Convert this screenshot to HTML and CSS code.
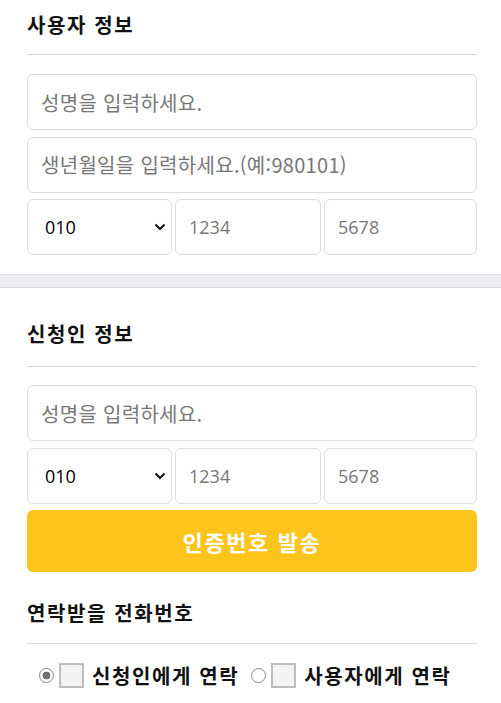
FILE: index.html
```html
<!DOCTYPE html>
<html lang="ko">
<head>
<meta charset="utf-8">
<title>정보 입력</title>
<link rel="stylesheet" href="styles.css">
</head>
<body>
<section class="section first">
  <h2 class="head">사용자 정보</h2>
  <div class="fields">
    <input class="field ko" type="text" placeholder="성명을 입력하세요.">
    <input class="field ko" type="text" placeholder="생년월일을 입력하세요.(예:980101)">
    <div class="phone">
      <div class="select-wrap">
        <select class="select"><option>010</option></select>
        <svg class="chev" width="12" height="8" viewBox="0 0 12 8"><path d="M1.5 1.5 L6 6 L10.5 1.5" fill="none" stroke="#111" stroke-width="2"/></svg>
      </div>
      <input class="field num" type="text" placeholder="1234">
      <input class="field num" type="text" placeholder="5678">
    </div>
  </div>
</section>
<div class="band"></div>
<section class="section second">
  <h2 class="head">신청인 정보</h2>
  <div class="fields">
    <input class="field ko" type="text" placeholder="성명을 입력하세요.">
    <div class="phone">
      <div class="select-wrap">
        <select class="select"><option>010</option></select>
        <svg class="chev" width="12" height="8" viewBox="0 0 12 8"><path d="M1.5 1.5 L6 6 L10.5 1.5" fill="none" stroke="#111" stroke-width="2"/></svg>
      </div>
      <input class="field num" type="text" placeholder="1234">
      <input class="field num" type="text" placeholder="5678">
    </div>
    <button class="send" type="button">인증번호 발송</button>
  </div>
  <h2 class="head third">연락받을 전화번호</h2>
  <div class="choices">
    <label class="choice"><input class="radio" type="radio" name="to" checked><span class="box"></span><span class="txt">신청인에게 연락</span></label>
    <label class="choice"><input class="radio" type="radio" name="to"><span class="box"></span><span class="txt">사용자에게 연락</span></label>
  </div>
</section>
</body>
</html>
```
FILE: styles.css
```css
* { box-sizing: border-box; }
html, body { margin: 0; padding: 0; background: #fff; }
body {
  font-family: "Noto Sans CJK KR", "Open Sans", sans-serif;
  color: #111;
}
.section { padding: 0 24px 0 27px; }
.head {
  margin: 0;
  font-size: 20px;
  font-weight: 700;
  letter-spacing: 1.6px;
  line-height: 30px;
  padding: 10px 0 14px;
  border-bottom: 1px solid #dcdcdc;
}
.second .head { padding: 31px 0 17px; }
.second .head.third { padding: 26px 0 15px; }
.fields {
  display: flex;
  flex-direction: column;
  gap: 6.5px;
  margin-top: 19px;
}
.second .fields { margin-top: 18px; }
.field {
  height: 56px;
  width: 100%;
  border: 1px solid #dcdcdc;
  border-radius: 6px;
  padding: 0 13px;
  color: #222;
  background: #fff;
  outline: none;
}
.field.ko {
  font-family: "Noto Sans CJK KR", sans-serif;
  font-size: 20px;
  letter-spacing: 0.3px;
}
.field.num {
  font-family: "Open Sans", sans-serif;
  font-size: 18px;
}
.field::placeholder { color: #777; }
.phone {
  display: grid;
  grid-template-columns: 145px 146px 1fr;
  column-gap: 3px;
}
.select-wrap { position: relative; }
.select {
  appearance: none;
  -webkit-appearance: none;
  width: 100%;
  height: 56px;
  border: 1px solid #dcdcdc;
  border-radius: 6px;
  padding: 0 17px;
  font-family: "Open Sans", sans-serif;
  font-size: 18px;
  color: #000;
  background: #fff;
}
.chev { position: absolute; left: 127px; top: 24px; pointer-events: none; }
.send {
  height: 62px;
  border: none;
  border-radius: 6px;
  background: #fdc51c;
  color: #fff;
  font-family: "Noto Sans CJK KR", sans-serif;
  font-size: 22px;
  font-weight: 700;
  letter-spacing: 1.6px;
}
.band {
  height: 14px;
  margin-top: 19px;
  background: #ebebf0;
  border-top: 1px solid #dcdcdc;
  border-bottom: 1px solid #dcdcdc;
}
.choices {
  display: flex;
  gap: 12px;
  padding: 19px 0 0 12px;
}
.choice { display: flex; align-items: center; }
.radio {
  appearance: none;
  -webkit-appearance: none;
  width: 15px;
  height: 15px;
  margin: 0 5px 0 0;
  border: 1.5px solid #8a8a8a;
  border-radius: 50%;
  background: #fff;
}
.radio:checked { background: radial-gradient(circle, #707070 0 3.6px, #fff 4.2px); }
.box {
  width: 25px;
  height: 25px;
  border: 2px solid #bdbdbd;
  background: #f3f3f3;
  margin-right: 8px;
}
.txt { font-size: 20px; font-weight: 700; letter-spacing: 1.6px; line-height: 25px; }
```
